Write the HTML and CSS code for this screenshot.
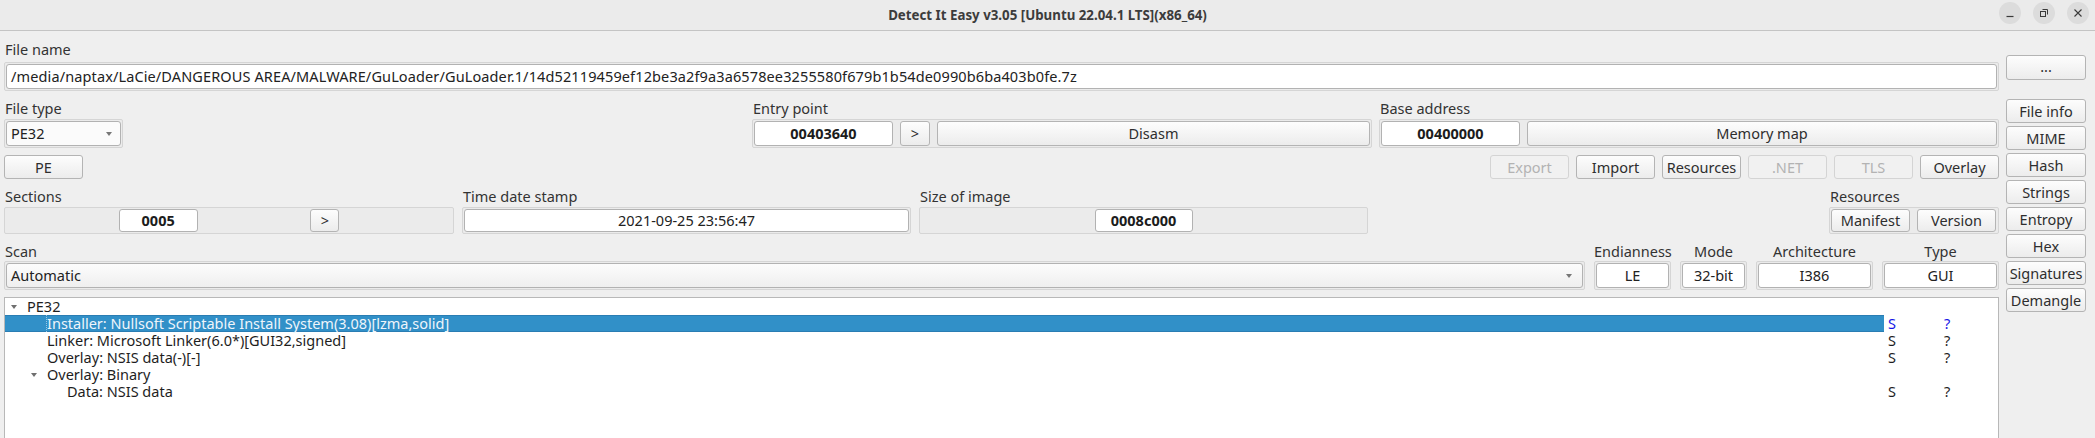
FILE: index.html
```html
<!DOCTYPE html>
<html>
<head>
<meta charset="utf-8">
<title>Detect It Easy</title>
<link rel="stylesheet" href="styles.css">
</head>
<body>
<div class="titlebar">
  <div></div>
  <div class="title">Detect It Easy v3.05 [Ubuntu 22.04.1 LTS](x86_64)</div>
  <div class="winbtns">
    <svg class="wb" width="22" height="22" viewBox="0 0 22 22"><circle cx="11" cy="11" r="11" fill="#dcdcdc"/><path d="M7.5 14.5 H14.5" stroke="#3a3a3a" stroke-width="1.2"/></svg>
    <svg class="wb" width="22" height="22" viewBox="0 0 22 22"><circle cx="11" cy="11" r="11" fill="#dcdcdc"/><rect x="7.5" y="9.5" width="5" height="5" fill="none" stroke="#3a3a3a" stroke-width="1"/><path d="M9.5 7.5 H14.5 V12.5" fill="none" stroke="#3a3a3a" stroke-width="1"/></svg>
    <svg class="wb" width="22" height="22" viewBox="0 0 22 22"><circle cx="11" cy="11" r="11" fill="#dcdcdc"/><path d="M7.5 7.5 L14.5 14.5 M14.5 7.5 L7.5 14.5" stroke="#3a3a3a" stroke-width="1.1"/></svg>
  </div>
</div>

<div class="main">
  <div class="left">
    <div class="lbl fn-label">File name</div>
    <div class="frame path-frame">
      <div class="input">/media/naptax/LaCie/DANGEROUS AREA/MALWARE/GuLoader/GuLoader.1/14d52119459ef12be3a2f9a3a6578ee3255580f679b1b54de0990b6ba403b0fe.7z</div>
    </div>

    <div class="row1">
      <div class="col">
        <div class="lbl">File type</div>
        <div class="frame ft-frame">
          <div class="combo small"><span>PE32</span><span class="tri"></span></div>
        </div>
      </div>
      <div class="col">
        <div class="lbl">Entry point</div>
        <div class="frame hbox">
          <div class="val bold w139">00403640</div>
          <div class="btn w30">&gt;</div>
          <div class="btn grow">Disasm</div>
        </div>
      </div>
      <div class="col">
        <div class="lbl">Base address</div>
        <div class="frame hbox">
          <div class="val bold w139">00400000</div>
          <div class="btn grow">Memory map</div>
        </div>
      </div>
    </div>

    <div class="row2">
      <div class="btn w79 h24">PE</div>
      <div class="btnrow">
        <div class="btn w79 h24 dis">Export</div>
        <div class="btn w79 h24">Import</div>
        <div class="btn w79 h24">Resources</div>
        <div class="btn w79 h24 dis">.NET</div>
        <div class="btn w79 h24 dis">TLS</div>
        <div class="btn w79 h24">Overlay</div>
      </div>
    </div>

    <div class="row3">
      <div class="col">
        <div class="lbl">Sections</div>
        <div class="frame f27 even">
          <div class="val bold w79 h23">0005</div>
          <div class="btn w29 h23">&gt;</div>
        </div>
      </div>
      <div class="col">
        <div class="lbl">Time date stamp</div>
        <div class="frame f27 hbox">
          <div class="val grow h23">2021-09-25 23:56:47</div>
        </div>
      </div>
      <div class="col">
        <div class="lbl">Size of image</div>
        <div class="frame f27 center">
          <div class="val bold w98 h23">0008c000</div>
        </div>
      </div>
      <div></div>
      <div class="col">
        <div class="lbl">Resources</div>
        <div class="frame f27 hbox">
          <div class="btn w79 h23">Manifest</div>
          <div class="btn w79 h23">Version</div>
        </div>
      </div>
    </div>

    <div class="row4">
      <div class="col">
        <div class="lbl">Scan</div>
        <div class="frame hbox">
          <div class="combo grow grad"><span>Automatic</span><span class="tri"></span></div>
        </div>
      </div>
      <div class="col c">
        <div class="lbl">Endianness</div>
        <div class="frame hbox"><div class="val grow">LE</div></div>
      </div>
      <div class="col c">
        <div class="lbl">Mode</div>
        <div class="frame hbox"><div class="val grow">32-bit</div></div>
      </div>
      <div class="col c">
        <div class="lbl">Architecture</div>
        <div class="frame hbox"><div class="val grow">I386</div></div>
      </div>
      <div class="col c">
        <div class="lbl">Type</div>
        <div class="frame hbox"><div class="val grow">GUI</div></div>
      </div>
    </div>

    <div class="tree">
      <div class="trow">
        <div class="name lv0"><span class="arr"><i></i></span>PE32</div>
        <div class="s"></div><div class="q"></div>
      </div>
      <div class="trow">
        <div class="name lv1 sel"><span class="arr"></span><span class="focus">Installer: Nullsoft Scriptable Install System(3.08)[lzma,solid]</span></div>
        <div class="s blue">S</div><div class="q blue">?</div>
      </div>
      <div class="trow">
        <div class="name lv1"><span class="arr"></span>Linker: Microsoft Linker(6.0*)[GUI32,signed]</div>
        <div class="s">S</div><div class="q">?</div>
      </div>
      <div class="trow">
        <div class="name lv1"><span class="arr"></span>Overlay: NSIS data(-)[-]</div>
        <div class="s">S</div><div class="q">?</div>
      </div>
      <div class="trow">
        <div class="name lv1"><span class="arr"><i></i></span>Overlay: Binary</div>
        <div class="s"></div><div class="q"></div>
      </div>
      <div class="trow">
        <div class="name lv2"><span class="arr"></span>Data: NSIS data</div>
        <div class="s">S</div><div class="q">?</div>
      </div>
    </div>
  </div>

  <div class="right">
    <div class="btn rb dots">...</div>
    <div class="btn rb first">File info</div>
    <div class="btn rb">MIME</div>
    <div class="btn rb">Hash</div>
    <div class="btn rb">Strings</div>
    <div class="btn rb">Entropy</div>
    <div class="btn rb">Hex</div>
    <div class="btn rb">Signatures</div>
    <div class="btn rb">Demangle</div>
  </div>
</div>
</body>
</html>
```

FILE: styles.css
```css
* { box-sizing: border-box; }

body {
  margin: 0;
  width: 2095px;
  height: 438px;
  overflow: hidden;
  background: #efefef;
  font-family: "Noto Sans", "DejaVu Sans", sans-serif;
  font-size: 14.5px;
  line-height: 17px;
  color: #333;
}

.titlebar {
  height: 31px;
  background: #ebebeb;
  border-bottom: 1px solid #c4c4c4;
  display: grid;
  grid-template-columns: 1fr auto 1fr;
  align-items: center;
}
.title {
  font-weight: bold;
  font-size: 13.3px;
  color: #3c3c3c;
  padding-top: 1px;
}
.winbtns {
  display: flex;
  justify-content: flex-end;
  gap: 12px;
  padding-right: 6px;
  padding-bottom: 4px;
}
.wb { display: block; }

.main {
  display: flex;
  gap: 7px;
  padding: 0 9px 0 4px;
}
.left {
  flex: 1;
  min-width: 0;
}
.right {
  width: 80px;
  display: flex;
  flex-direction: column;
}

.lbl {
  height: 17px;
  line-height: 17px;
  padding-left: 1px;
  white-space: nowrap;
}
.fn-label { margin-top: 10px; }

.frame {
  border: 1px solid #d5d5d5;
  background: #ebebeb;
  border-radius: 2px;
  padding: 1px;
  height: 29px;
  margin-top: 2px;
}
.path-frame { margin-top: 4px; }

.input {
  height: 25px;
  border: 1px solid #b2b2b2;
  border-radius: 3px;
  background: #fff;
  padding: 0 4px;
  line-height: 23px;
  white-space: nowrap;
  overflow: hidden;
  color: #222;
  letter-spacing: 0.12px;
}

.hbox { display: flex; gap: 7px; }
.even { display: flex; justify-content: space-evenly; }
.center { display: flex; justify-content: center; }
.grow { flex: 1; }

.val {
  height: 25px;
  border: 1px solid #b2b2b2;
  border-radius: 3px;
  background: #fff;
  text-align: center;
  line-height: 23px;
  color: #222;
  white-space: nowrap;
}
.bold { font-weight: bold; color: #1c1c1c; }

.btn {
  height: 25px;
  border: 1px solid #b4b4b4;
  border-radius: 3px;
  background: linear-gradient(#fdfdfd, #ececec);
  text-align: center;
  line-height: 23px;
  color: #2e2e2e;
  white-space: nowrap;
}
.btn.dis {
  border-color: #d4d4d4;
  background: #f1f1f1;
  color: #b3b3b3;
}

.w139 { width: 139px; }
.w30 { width: 30px; }
.w29 { width: 29px; }
.w79 { width: 79px; }
.w98 { width: 98px; }
.h24 { height: 24px; line-height: 22px; }
.h23 { height: 23px; line-height: 21px; }

.combo {
  height: 25px;
  border: 1px solid #b2b2b2;
  border-radius: 3px;
  background: #fbfbfb;
  display: flex;
  align-items: center;
  justify-content: space-between;
  padding: 0 10px 0 4px;
  color: #222;
}
.combo.grad { background: linear-gradient(#fcfcfc, #efefef); padding-right: 10px; }
.combo.small { padding-right: 8px; }
.tri {
  width: 0;
  height: 0;
  border-left: 3.5px solid transparent;
  border-right: 3.5px solid transparent;
  border-top: 4px solid #777;
}
.ft-frame { width: 119px; }

.row1 {
  display: grid;
  grid-template-columns: 741px 620px 620px;
  column-gap: 7px;
  margin-top: 9px;
}

.row2 {
  display: flex;
  margin-top: 7px;
}
.btnrow {
  margin-left: auto;
  display: flex;
  gap: 7px;
}

.row3 {
  display: grid;
  grid-template-columns: 450px 449px 449px 1fr 170px;
  column-gap: 8px;
  margin-top: 9px;
}
.f27 { height: 27px; }

.row4 {
  display: grid;
  grid-template-columns: 1fr 77px 67px 117px 117px;
  column-gap: 9px;
  margin-top: 9px;
}
.row4 .frame { margin-top: 1px; }
.col.c .lbl { text-align: center; padding-left: 0; }

.tree {
  margin-top: 7px;
  height: 160px;
  background: #fff;
  border: 1px solid #b8b8b8;
  color: #1e1e1e;
}
.trow {
  display: flex;
  height: 17px;
  line-height: 17px;
}
.name {
  width: 1879px;
  display: flex;
  align-items: center;
  white-space: nowrap;
}
.lv0 { padding-left: 0; }
.lv1 { padding-left: 20px; }
.lv2 { padding-left: 40px; }
.arr {
  width: 22px;
  flex: 0 0 22px;
  display: flex;
  align-items: center;
}
.arr i {
  display: block;
  margin-left: 6px;
  width: 0;
  height: 0;
  border-left: 3.5px solid transparent;
  border-right: 3.5px solid transparent;
  border-top: 4px solid #6f6f6f;
}
.sel {
  background: #3190c8;
  border-top: 1px solid #2a7db3;
  border-bottom: 1px solid #2a7db3;
  color: #eef5fb;
}
.focus { border-left: 1px dotted #9cc7e4; margin-left: -1px; }
.s { width: 56px; padding-left: 4px; }
.q { width: 40px; padding-left: 4px; }
.blue { color: #1414e6; }

.rb {
  height: 24px;
  line-height: 22px;
  margin-top: 3px;
}
.rb.dots { margin-top: 24px; height: 25px; line-height: 21px; }
.rb.first { margin-top: 19px; }
```
